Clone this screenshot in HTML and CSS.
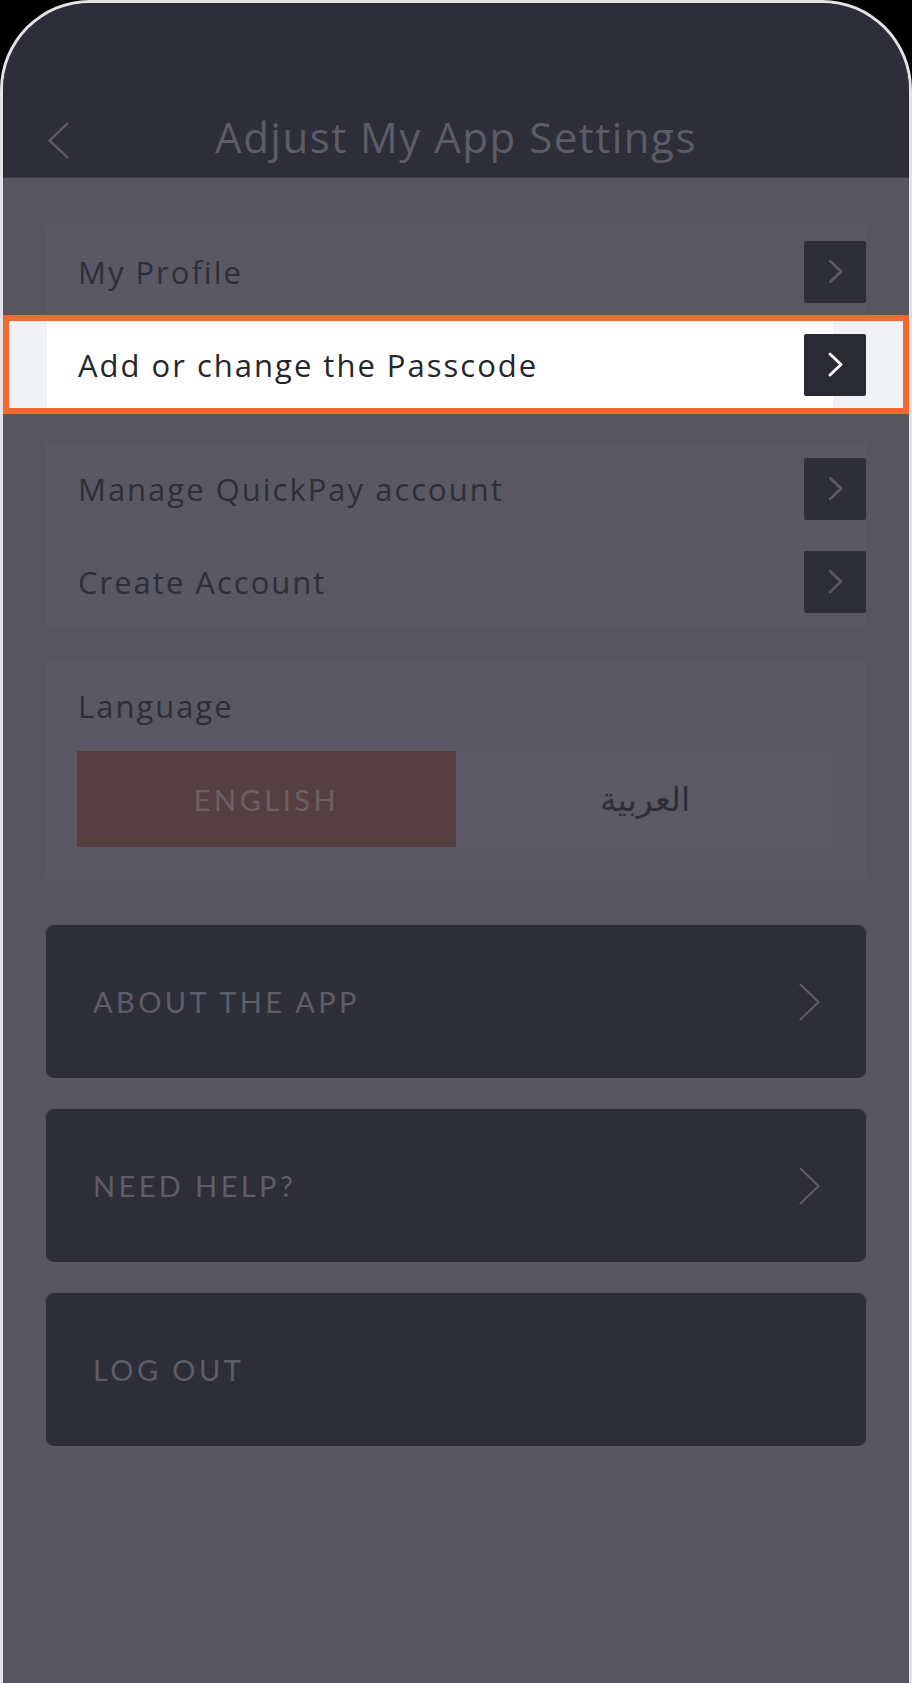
FILE: index.html
```html
<!DOCTYPE html>
<html lang="en">
<head>
<meta charset="utf-8">
<title>Adjust My App Settings</title>
<link rel="stylesheet" href="styles.css">
</head>
<body>
<div class="frame">
  <div class="screen">
    <header class="header">
      <div class="back">
        <svg width="22" height="37" viewBox="0 0 22 37"><path d="M20.5 1.5 L2.5 18.5 L20.5 35.5" fill="none" stroke="#5d5c69" stroke-width="2.4" stroke-linecap="round" stroke-linejoin="round"/></svg>
      </div>
      <h1 class="title">Adjust My App Settings</h1>
      <div class="spacer"></div>
    </header>

    <main class="content">
      <section class="card">
        <div class="row">
          <span class="row-label">My Profile</span>
          <span class="go">
            <svg width="15" height="25" viewBox="0 0 15 25"><path d="M2 2 L13 12.5 L2 23" fill="none" stroke="#5b5a67" stroke-width="2.5" stroke-linecap="round" stroke-linejoin="round"/></svg>
          </span>
        </div>
        <div class="row row-hl">
          <span class="row-label">Add or change the Passcode</span>
          <span class="go go-hl">
            <svg width="15" height="25" viewBox="0 0 15 25"><path d="M2 2 L13 12.5 L2 23" fill="none" stroke="#ffffff" stroke-width="2.8" stroke-linecap="round" stroke-linejoin="round"/></svg>
          </span>
        </div>
      </section>

      <section class="card">
        <div class="row">
          <span class="row-label">Manage QuickPay account</span>
          <span class="go">
            <svg width="15" height="25" viewBox="0 0 15 25"><path d="M2 2 L13 12.5 L2 23" fill="none" stroke="#5b5a67" stroke-width="2.5" stroke-linecap="round" stroke-linejoin="round"/></svg>
          </span>
        </div>
        <div class="row">
          <span class="row-label">Create Account</span>
          <span class="go">
            <svg width="15" height="25" viewBox="0 0 15 25"><path d="M2 2 L13 12.5 L2 23" fill="none" stroke="#5b5a67" stroke-width="2.5" stroke-linecap="round" stroke-linejoin="round"/></svg>
          </span>
        </div>
      </section>

      <section class="card lang">
        <div class="lang-label">Language</div>
        <div class="toggle">
          <span class="opt opt-on">ENGLISH</span>
          <span class="opt opt-ar" lang="ar" dir="rtl">العربية</span>
        </div>
      </section>

      <div class="buttons">
        <div class="btn">
          <span class="btn-label">ABOUT THE APP</span>
          <svg width="21" height="38" viewBox="0 0 21 38"><path d="M1.5 1.5 L19.5 19 L1.5 36.5" fill="none" stroke="#5e5d6a" stroke-width="2" stroke-linecap="round" stroke-linejoin="round"/></svg>
        </div>
        <div class="btn">
          <span class="btn-label">NEED HELP?</span>
          <svg width="21" height="38" viewBox="0 0 21 38"><path d="M1.5 1.5 L19.5 19 L1.5 36.5" fill="none" stroke="#5e5d6a" stroke-width="2" stroke-linecap="round" stroke-linejoin="round"/></svg>
        </div>
        <div class="btn">
          <span class="btn-label">LOG OUT</span>
        </div>
      </div>
    </main>
  </div>
</div>
</body>
</html>
```

FILE: styles.css
```css
html, body {
  margin: 0;
  padding: 0;
  background: #000;
}
body {
  width: 912px;
  height: 1683px;
  overflow: hidden;
  font-family: "Lato", "Liberation Sans", sans-serif;
}
.frame {
  width: 912px;
  height: 1683px;
  box-sizing: border-box;
  padding: 3px 3px 0 3px;
  background: #e4e4e8;
  border-radius: 90px 90px 0 0;
}
.screen {
  height: 100%;
  background: #565560;
  border-radius: 87px 87px 0 0;
  overflow: hidden;
}
.header {
  height: 175px;
  box-sizing: border-box;
  padding-top: 104px;
  background: #2e2d3a;
  border-bottom: 1px solid #3a3946;
  display: grid;
  grid-template-columns: 1fr auto 1fr;
  align-items: start;
}
.back {
  padding-left: 44px;
  padding-top: 15px;
  display: flex;
}
.title {
  margin: 0;
  font-family: "Open Sans", "Lato", sans-serif;
  font-weight: 400;
  font-size: 42px;
  line-height: 60px;
  color: #5d5c69;
  letter-spacing: 1.5px;
}
.content {
  padding: 47px 43px 0 43px;
  display: flex;
  flex-direction: column;
  gap: 31px;
}
.card {
  background: #595864;
  display: flex;
  flex-direction: column;
}
.row {
  height: 93px;
  display: flex;
  align-items: center;
  justify-content: space-between;
  padding-left: 32px;
  position: relative;
  z-index: 0;
}
.row-label {
  font-family: "Open Sans", "Lato", sans-serif;
  font-size: 31px;
  line-height: 36px;
  letter-spacing: 2px;
  color: #2e2d39;
}
.go {
  width: 62px;
  height: 62px;
  border-radius: 2px;
  background: #2e2d3a;
  display: flex;
  align-items: center;
  justify-content: center;
}
.row-hl .row-label {
  color: #26262c;
}
.row-hl::before {
  content: "";
  position: absolute;
  left: -43px;
  right: -43px;
  top: -3px;
  bottom: -3px;
  border: 6px solid #f26a2f;
  background: linear-gradient(to right, #f1f2f5 38px, #ffffff 38px, #ffffff 824px, #f1f2f5 824px);
  z-index: -1;
}
.go-hl {
  background: #2a2b32;
}
.lang {
  padding: 29px 32px 32px 31px;
}
.lang-label {
  font-family: "Open Sans", "Lato", sans-serif;
  font-size: 31px;
  line-height: 36px;
  letter-spacing: 2px;
  color: #2e2d39;
  margin-bottom: 27px;
  padding-left: 1px;
}
.toggle {
  display: grid;
  grid-template-columns: 379px 1fr;
  height: 96px;
  background: #5b5a66;
}
.opt {
  display: flex;
  align-items: center;
  justify-content: center;
}
.opt-on {
  background: #553f42;
  color: #6f5f64;
  font-size: 29px;
  letter-spacing: 3.5px;
}
.opt-ar {
  font-family: "DejaVu Sans", sans-serif;
  font-size: 33px;
  color: #2e2d39;
}
.buttons {
  margin-top: 15px;
  display: flex;
  flex-direction: column;
  gap: 31px;
}
.btn {
  height: 153px;
  box-sizing: border-box;
  border-radius: 8px;
  background: #2e2d3a;
  display: flex;
  align-items: center;
  justify-content: space-between;
  padding: 0 46px 0 47px;
}
.btn-label {
  font-size: 29px;
  letter-spacing: 3.4px;
  color: #5e5d6a;
}
```
